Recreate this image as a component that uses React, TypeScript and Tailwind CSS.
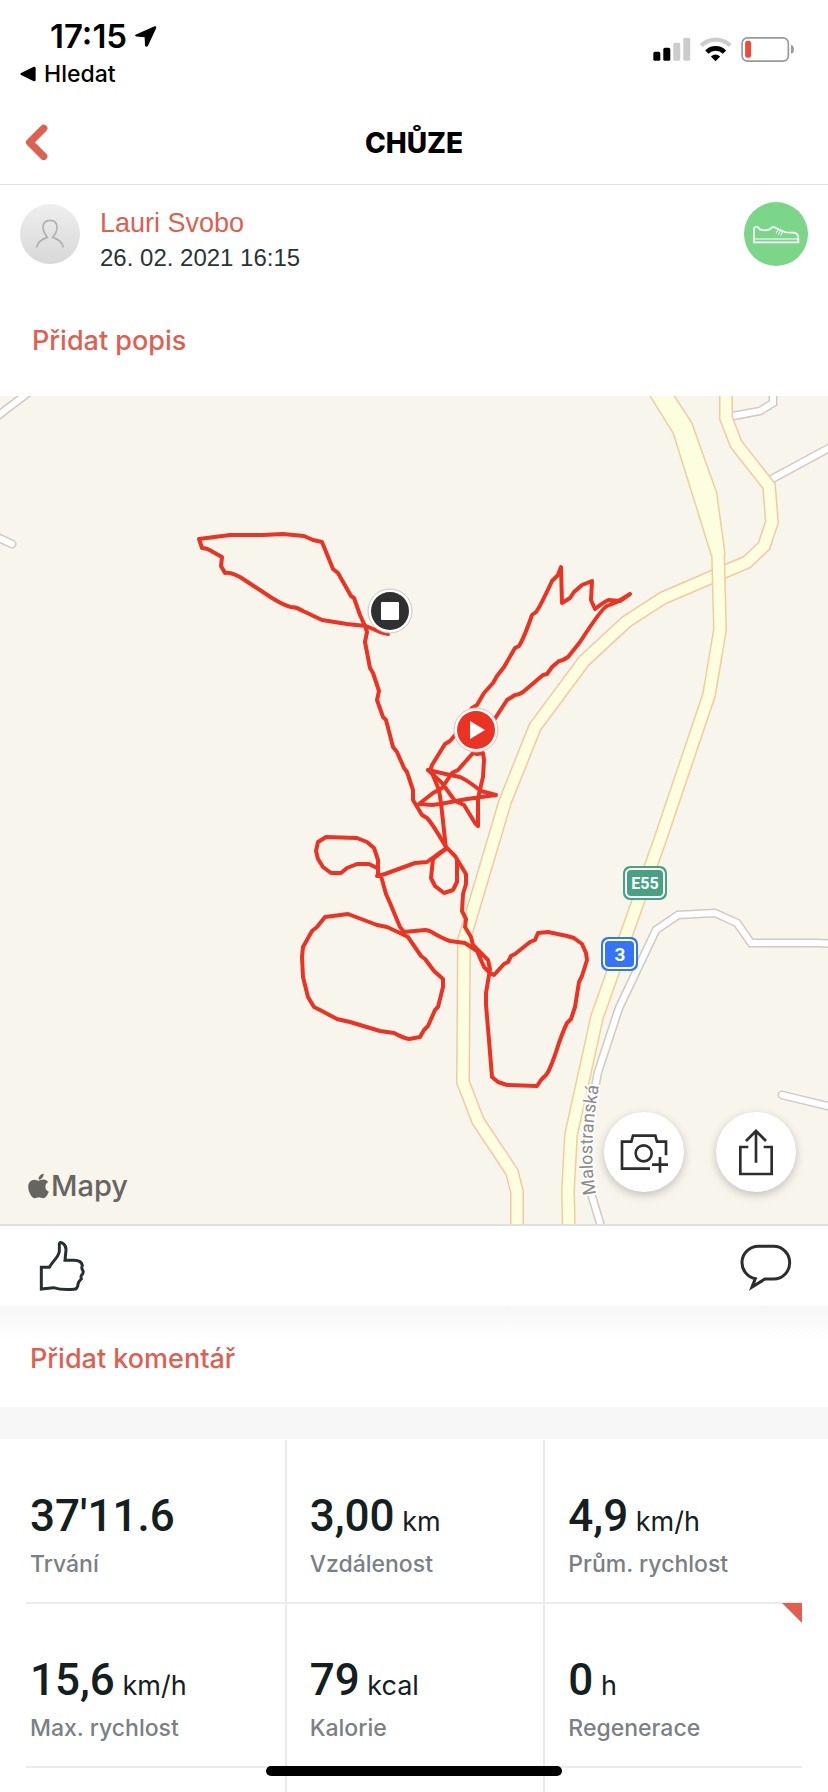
import { FaApple } from "react-icons/fa";

type Stat = {
  value: string;
  unit?: string;
  label: string;
  flagged?: boolean;
};

const STATS: Stat[] = [
  { value: "37'11.6", label: "Trvání" },
  { value: "3,00", unit: "km", label: "Vzdálenost" },
  { value: "4,9", unit: "km/h", label: "Prům. rychlost" },
  { value: "15,6", unit: "km/h", label: "Max. rychlost" },
  { value: "79", unit: "kcal", label: "Kalorie" },
  { value: "0", unit: "h", label: "Regenerace", flagged: true },
];

const SECONDARY_ROAD =
  "M726 380V418L736 444L769 486L772 522L764 546L747 562L663 598L626 622L584 661L535 727L505 802L464 940L463 1082L478 1121L512 1172L517 1192V1240";
const MAIN_ROAD =
  "M718 552L720 630L709 695L660 840L597 1017L571 1135L568 1190L569 1240";
const MAIN_ROAD_WIDE = "M641 380L674 433L712 555H724V552L716 493L691 423L663 380Z";
const LOCAL_ROADS = [
  "M773 380V403L760 411L733 416",
  "M770 480L840 442",
  "M840 944L817 943H751L737 923L715 913L678 915L656 930L619 1008L598 1072L595 1088",
  "M590 1190L604 1236",
  "M782 1095L840 1109",
  "M-10 422L8 408L40 384",
  "M-10 534L12 544",
];

const ROUTE = [
  "M388 634L380 632L366 626L347 624L322 620L303 611Q297 607 291 607Q285 606 272 598L240 577Q230 572 225 573L221 566L222 557L213 552Q207 548 202 548L199 539L230 535H263L283 534L304 536L313 540L322 542L333 569L338 573L351 596L354 598L360 615L365 626L367 632L365 642L370 668L373 673L379 691L377 700L383 717L386 720L393 747L397 752L404 768L407 772L413 790V800L422 815L427 818Q432 823 446 847",
  "M446 849L441 803L439 790L432 773L428 770M431 768L432 765L445 744L450 741L456 734L472 708L477 705L484 693L493 683L497 676L504 667L515 648L519 646Q524 638 532 615L536 612Q540 607 552 581L558 575L561 567L562 603L570 598L574 592L582 585L592 581L591 600L595 609Q605 601 609 600L620 601L630 594L617 602L607 606Q602 608 580 642L568 657Q562 661 559 661L552 667L547 674L543 675L523 692Q518 695 515 695L507 700L494 720",
  "M496 795L481 791Q467 780 460 777L450 775L428 770L442 783L455 801L464 805L475 823L478 826V798L483 777L484 760L483 753L477 754L473 753L458 770L452 773L442 788L433 793L419 804L432 805L440 804L467 799Z",
  "M447 848L455 856L466 874V884L463 894L462 911L466 919L465 927L471 937L473 945L488 960L490 969L486 993V1005L489 1040L492 1077L498 1082L507 1085L537 1086L541 1080L546 1075Q549 1072 555 1055Q562 1033 567 1023L571 1019L575 1007L579 982L582 976L587 960L586 953L582 944L574 938L567 936L548 932L538 933L535 940L530 942L515 954L511 956L508 962L504 964L494 975L490 973L484 967L477 951L465 943L450 941Q444 939 435 934Q429 930 425 930L404 932L400 927L390 903L386 894L381 876L377 876L385 874L415 863L427 862L438 854Z",
  "M378 876V860L374 848L367 842L357 838L326 837L318 842L316 851L318 859L323 867L331 873H341L347 868L357 864H369L377 868",
  "M447 848L433 859L431 878L435 886L444 893L453 890L457 882V860",
  "M400 933L387 927L377 925L348 914L325 917L317 927L312 931L303 947L302 957L303 977L308 997L314 1007L320 1010L337 1019L350 1022L380 1031L394 1033Q403 1038 409 1039L420 1037L424 1030L428 1026L435 1010L438 1007L443 987V979L434 971L425 959L421 956L408 937Z",
];

function StatusIcons() {
  return (
    <svg viewBox="710 106 436 86" className="h-[29px] w-[145px]" aria-hidden="true">
      <rect x="717" y="156" width="21" height="27" rx="5" />
      <rect x="747" y="144" width="21" height="39" rx="5" />
      <rect x="777" y="129" width="21" height="54" rx="5" fill="#ccc" />
      <rect x="807" y="114" width="21" height="69" rx="5" fill="#ccc" />
      <path d="M861 137A62 62 0 0 1 948 137" fill="none" stroke="#ccc" strokeWidth="13" />
      <path d="M878 157A37 37 0 0 1 931 157" fill="none" stroke="#000" strokeWidth="14" />
      <path d="M904 184L890 170Q904 158 918 170Z" />
      <rect x="984" y="114" width="139" height="70" rx="16" fill="none" stroke="#999" strokeWidth="5" />
      <rect x="993" y="123" width="18" height="51" rx="7" fill="#ee4b3b" />
      <path d="M1131 135Q1140 138 1140 149Q1140 159 1131 162Z" fill="#999" />
    </svg>
  );
}

function AvatarIcon() {
  return (
    <svg viewBox="60 72 180 180" className="size-full" aria-hidden="true">
      <path
        d="M110 202Q114 181 142 172Q129 155 129 142Q130 121 150 121Q171 121 171 142Q171 158 158 172Q186 181 190 202"
        fill="none"
        stroke="#b0b0b0"
        strokeWidth="5"
      />
    </svg>
  );
}

function ShoeIcon() {
  return (
    <svg viewBox="990 606 192 192" className="size-full" fill="none" stroke="#fff" aria-hidden="true">
      <path
        d="M1020 727V687Q1022 678 1031 681Q1037 691 1053 691Q1066 691 1078 680Q1098 690 1110 695Q1118 698 1140 698Q1153 701 1153 713V727Z"
        strokeWidth="5"
      />
      <path d="M1020 717H1153" strokeWidth="4" opacity="0.7" />
      <path d="M1093 688L1086 700M1100 691L1093 704M1106 695L1100 707" strokeWidth="3" />
    </svg>
  );
}

function ActivityMap() {
  return (
    <svg viewBox="0 396 828 828" className="block aspect-square w-full" role="img" aria-label="Mapa">
      <rect y="396" width="828" height="828" fill="#f8f5ed" />
      <g fill="none" strokeLinecap="round">
        {LOCAL_ROADS.map((d) => (
          <path key={d} d={d} stroke="#d0cac1" strokeWidth="9" />
        ))}
        {LOCAL_ROADS.map((d) => (
          <path key={d} d={d} stroke="#fff" strokeWidth="6" />
        ))}
      </g>
      <path d={SECONDARY_ROAD} fill="none" stroke="#efcba2" strokeWidth="14" />
      <path d={SECONDARY_ROAD} fill="none" stroke="#fdfddf" strokeWidth="11" />
      <path d={MAIN_ROAD_WIDE} fill="#fdfddf" stroke="#edcf9c" strokeWidth="3" />
      <path d={MAIN_ROAD} fill="none" stroke="#edcf9c" strokeWidth="14" />
      <path d={MAIN_ROAD} fill="none" stroke="#fdfddf" strokeWidth="11" />
      <path d={MAIN_ROAD_WIDE} fill="#fdfddf" />

      <path id="street" d="M596 1194Q587 1148 600 1080" fill="none" />
      <text
        className="font-[Roboto,sans-serif] text-[18px]"
        fill="#8a8a8a"
        stroke="#fdfcf9"
        strokeWidth="4"
        strokeLinejoin="round"
        paintOrder="stroke"
      >
        <textPath href="#street">Malostranská</textPath>
      </text>

      <rect x="623" y="866" width="44" height="34" rx="7" fill="#49a184" />
      <rect x="626" y="869" width="38" height="28" rx="5" fill="none" stroke="#fff" strokeWidth="2" />
      <text
        x="645"
        y="889"
        textAnchor="middle"
        fill="#fff"
        className="font-[Roboto,sans-serif] text-[16px] font-bold"
      >
        E55
      </text>
      <rect x="601" y="937" width="37" height="34" rx="7" fill="#3474f5" />
      <rect x="604" y="940" width="31" height="28" rx="5" fill="none" stroke="#fff" strokeWidth="2" />
      <text
        x="620"
        y="961"
        textAnchor="middle"
        fill="#fff"
        className="font-[Roboto,sans-serif] text-[19px] font-bold"
      >
        3
      </text>

      <g fill="none" stroke="#ea3323" strokeWidth="4" strokeLinejoin="round" strokeLinecap="round">
        {ROUTE.map((d) => (
          <path key={d} d={d} />
        ))}
      </g>

      <circle cx="390" cy="611" r="22" fill="#fff" stroke="#c9c7c3" strokeWidth="1" />
      <circle cx="390" cy="611" r="19" fill="#303030" />
      <rect x="381" y="602" width="18" height="18" rx="1" fill="#fff" />
      <circle cx="476" cy="730" r="22" fill="#fff" stroke="#f0b8b0" strokeWidth="1" />
      <circle cx="476" cy="730" r="19" fill="#ea3323" />
      <path d="M470 721V739L485 730Z" fill="#fff" />
    </svg>
  );
}

function StatCell({ stat }: { stat: Stat }) {
  return (
    <div className="relative h-[164px] border-b-2 border-l-2 border-[#ebebeb] pt-12 pl-[23px] nth-[3n+1]:border-l-0 nth-[3n+1]:pl-1">
      <p className="text-[27px] leading-[56px] text-[#14201f]">
        <span className="font-[Roboto,sans-serif] text-[44px] font-medium">{stat.value}</span>
        {stat.unit && <span> {stat.unit}</span>}
      </p>
      <p className="text-[23px] leading-7 font-medium text-[#7a8083]">{stat.label}</p>
      {stat.flagged && (
        <svg viewBox="0 0 20 20" className="absolute -top-px right-0 size-5" aria-hidden="true">
          <path d="M0 0H20V20Z" fill="#df5f51" />
        </svg>
      )}
    </div>
  );
}

export default function App() {
  return (
    <div className="min-h-screen bg-white font-[Inter,'Liberation_Sans',sans-serif] text-black">
      <header className="border-b border-[#dedfe4]">
        <div className="flex h-25 items-start justify-between pr-8">
          <div className="pt-4 pl-5">
            <div className="flex items-center gap-2 pl-[30px] text-[33px] leading-10 font-semibold">
              17:15
              <svg viewBox="405 76 66 62" className="h-[21px] w-[22px]" aria-hidden="true">
                <path d="M408 101L462 77Q471 75 468 83L444 135Q438 141 435 134L434 109L409 107Q402 104 408 101Z" />
              </svg>
            </div>
            <button className="flex items-center gap-2 text-[23px] leading-9 font-medium">
              <svg viewBox="64 201 44 44" className="size-4" aria-hidden="true">
                <path d="M67 220L102 203Q107 202 107 207V239Q107 244 102 243L67 226Q63 223 67 220Z" />
              </svg>
              Hledat
            </button>
          </div>
          <div className="pt-[35px]">
            <StatusIcons />
          </div>
        </div>
        <div className="grid h-[84px] grid-cols-[1fr_auto_1fr] items-center px-6">
          <button aria-label="Zpět" className="w-6">
            <svg viewBox="72 372 72 108" className="h-9 w-6" aria-hidden="true">
              <path
                d="M131 385L89 427L131 469"
                fill="none"
                stroke="#df5f51"
                strokeWidth="22"
                strokeLinejoin="round"
                strokeLinecap="round"
              />
            </svg>
          </button>
          <h1 className="pt-0.5 text-[28px] leading-9 font-extrabold">CHŮZE</h1>
        </div>
      </header>

      <section>
        <div className="flex items-start px-5 pt-[17px]">
          <div className="mt-0.5 size-15 shrink-0 rounded-full bg-linear-to-b from-[#eeeeee] to-[#d8d8d8]">
            <AvatarIcon />
          </div>
          <div className="ml-5 grow font-['Liberation_Sans',sans-serif]">
            <a href="#profil" className="block text-[27px] leading-[42px] text-[#df5f51]">
              Lauri Svobo
            </a>
            <p className="text-[24px] leading-7 text-[#2a3436]">26. 02. 2021 16:15</p>
          </div>
          <div className="size-16 shrink-0 rounded-full bg-[#7bd68a]">
            <ShoeIcon />
          </div>
        </div>
        <button className="mt-12 mb-[34px] block pl-8 text-[27px] leading-[42px] font-medium text-[#df5f51]">
          Přidat popis
        </button>
      </section>

      <section className="relative border-b-2 border-[#dfdfe3]">
        <ActivityMap />
        <div className="absolute bottom-5 left-7 flex items-center gap-0.5 text-[29px] leading-9 font-medium text-[#666561]">
          <FaApple className="h-7 w-[21px]" />
          Mapy
        </div>
        <div className="absolute right-8 bottom-8 flex gap-8">
          <button aria-label="Přidat fotku" className="size-20 rounded-full bg-white shadow-[0_3px_10px_rgba(0,0,0,0.22)]">
            <svg viewBox="132 815 240 240" className="size-full" fill="none" stroke="#2d2d2d" strokeWidth="8" aria-hidden="true">
              <path d="M318 945V904H291L286 886H219L214 904H186V985H270" />
              <circle cx="251" cy="939" r="24" />
              <path d="M300 950V997M276 973H324" />
            </svg>
          </button>
          <button aria-label="Sdílet" className="size-20 rounded-full bg-white shadow-[0_3px_10px_rgba(0,0,0,0.22)]">
            <svg viewBox="468 815 240 240" className="size-full" fill="none" stroke="#2d2d2d" strokeWidth="8" aria-hidden="true">
              <path d="M565 920H541V1001H635V920H611" />
              <path d="M588 967V871M558 902L588 872L618 902" />
            </svg>
          </button>
        </div>
      </section>

      <div className="flex h-20 items-center justify-between pr-9 pl-[38px]">
        <button aria-label="Líbí se mi">
          <svg viewBox="114 297 144 162" className="h-[54px] w-12" fill="none" stroke="#263032" strokeWidth="9" aria-hidden="true">
            <path d="M124 382H148C160 360 178 350 178 332V311Q180 305 187 309Q199 316 198 330L195 361H222Q244 361 247 376Q244 384 247 389Q252 396 247 403Q241 407 244 417Q233 427 234 434Q232 447 222 448Q185 451 160 443L124 447Z" />
          </svg>
        </button>
        <button aria-label="Komentovat">
          <svg viewBox="540 1200 156 156" className="size-[52px]" fill="none" stroke="#2d2d2d" strokeWidth="9" aria-hidden="true">
            <path d="M595 1219H641A48 49 0 0 1 641 1317H615L576 1341L586 1316A50 49 0 0 1 595 1219Z" />
          </svg>
        </button>
      </div>

      <section className="h-[101px] bg-linear-to-b from-[#f6f6f6] to-white to-35% pt-8">
        <button className="block pl-[30px] text-[27px] leading-[42px] font-medium text-[#df5f51]">
          Přidat komentář
        </button>
      </section>

      <section className="border-t-32 border-[#f7f7f7]">
        <div className="mx-[26px] grid grid-cols-3 pt-px">
          {STATS.map((stat) => (
            <StatCell key={stat.label} stat={stat} />
          ))}
          <div className="h-6" />
          <div className="h-6 border-l-2 border-[#ebebeb]" />
          <div className="h-6 border-l-2 border-[#ebebeb]" />
        </div>
      </section>

      <div className="fixed bottom-4 left-1/2 h-[10px] w-[296px] -translate-x-1/2 rounded-full bg-black" />
    </div>
  );
}
